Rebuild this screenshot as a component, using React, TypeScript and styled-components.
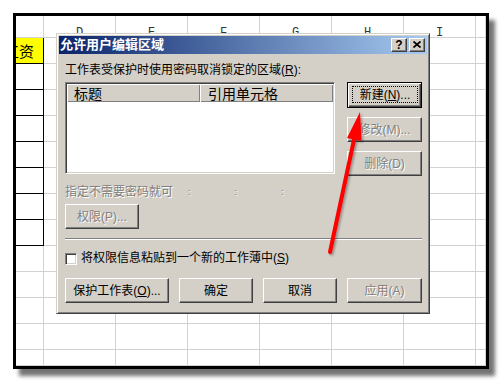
import React from "react";
import styled, { createGlobalStyle } from "styled-components";

const UI_FONT = `"Liberation Sans", "Noto Sans CJK SC", sans-serif`;

const GlobalStyle = createGlobalStyle`
  html, body { margin: 0; padding: 0; background: #fff; }
  body { font-family: ${UI_FONT}; font-size: 12px; }
  * { box-sizing: border-box; }
`;

const Page = styled.div`
  position: relative;
  width: 502px;
  height: 382px;
  padding: 13px 0 0 13px;
  overflow: hidden;
  background: #fff;
`;

const Sheet = styled.div`
  width: 476px;
  height: 356px;
  border: 3px solid #000;
  box-shadow: 6px 7px 4px rgba(0, 0, 0, 0.55);
  background: #fff;
  overflow: hidden;
`;

const Grid = styled.div`
  display: grid;
  grid-template-columns: 28px repeat(6, 72px) 10px;
  grid-template-rows: 22px repeat(12, 26px) 16px;
`;

const HeadCell = styled.div`
  border-right: 1px solid #d2d2d2;
  border-bottom: 1px solid #d2d2d2;
  display: flex;
  align-items: flex-end;
  justify-content: center;
  padding-bottom: 0;
  font-family: "Liberation Mono", monospace;
  font-size: 12px;
  line-height: 7px;
  color: #333;
`;

const Cell = styled.div<{ $boxed?: boolean; $fill?: string }>`
  border-right: 1px solid ${(p) => (p.$boxed ? "#000" : "#d2d2d2")};
  border-bottom: 1px solid ${(p) => (p.$boxed ? "#000" : "#d2d2d2")};
  background: ${(p) => p.$fill ?? "#fff"};
  overflow: hidden;
  display: flex;
  align-items: center;
  justify-content: flex-end;
  padding-right: 9px;
  font-family: "Noto Sans CJK SC", sans-serif;
  font-size: 15px;
  white-space: nowrap;
  color: #000;
`;

const Dialog = styled.div`
  position: absolute;
  left: 56px;
  top: 33px;
  width: 374px;
  height: 281px;
  background: #d4d0c8;
  border: 1px solid;
  border-color: #d4d0c8 #404040 #404040 #d4d0c8;
  box-shadow: inset 1px 1px #fff, inset -1px -1px #808080;
  padding: 2px;
  display: flex;
  flex-direction: column;
  font-family: ${UI_FONT};
  font-size: 12px;
  color: #000;
`;

const TitleBar = styled.div`
  height: 18px;
  background: linear-gradient(to right, #0a246a, #a6caf0);
  display: flex;
  align-items: center;
  gap: 2px;
  padding: 0 2px 0 1px;
`;

const TitleText = styled.div`
  flex: 1;
  color: #fff;
  font-weight: bold;
  font-size: 13px;
  line-height: 18px;
  white-space: nowrap;
`;

const CaptionButton = styled.div`
  width: 16px;
  height: 14px;
  background: #d4d0c8;
  border: 1px solid;
  border-color: #fff #404040 #404040 #fff;
  box-shadow: inset -1px -1px #808080;
  display: flex;
  align-items: center;
  justify-content: center;
  font-family: "Liberation Sans", sans-serif;
  font-weight: bold;
  font-size: 12px;
  line-height: 1;
  padding-bottom: 1px;
`;

const Client = styled.div`
  flex: 1;
  padding: 9px 5px 0 6px;
  display: flex;
  flex-direction: column;
`;

const Label = styled.div`
  height: 14px;
  line-height: 14px;
  white-space: nowrap;
`;

const U = styled.span`
  text-decoration: underline;
  text-underline-offset: 1px;
`;

const TopRow = styled.div`
  display: flex;
  align-items: flex-start;
  gap: 12px;
  margin-top: 5px;
`;

const ListBox = styled.div`
  width: 270px;
  height: 92px;
  background: #fff;
  border: 1px solid;
  border-color: #808080 #fff #fff #808080;
  box-shadow: inset 1px 1px #404040, inset -1px -1px #d4d0c8;
  padding: 1px;
`;

const ListHeader = styled.div`
  display: grid;
  grid-template-columns: 133px 1fr;
  height: 18px;
`;

const ColHeader = styled.div<{ $pad: number }>`
  background: #d4d0c8;
  box-shadow: inset 1px 1px #fff, inset -1px -1px #808080;
  padding-left: ${(p) => p.$pad}px;
  font-family: "Noto Sans CJK SC", sans-serif;
  font-size: 14px;
  line-height: 18px;
  white-space: nowrap;
`;

const ButtonColumn = styled.div`
  display: flex;
  flex-direction: column;
  gap: 9px;
  width: 75px;
`;

const Button = styled.div<{ $w?: number; $h?: number; $dim?: boolean; $default?: boolean }>`
  width: ${(p) => p.$w ?? 75}px;
  height: ${(p) => p.$h ?? 25}px;
  background: #d4d0c8;
  border: 1px solid;
  border-color: ${(p) => (p.$default ? "#000" : "#fff #404040 #404040 #fff")};
  box-shadow: ${(p) =>
    p.$default
      ? "inset 1px 1px #fff, inset -1px -1px #404040, inset -2px -2px #808080"
      : "inset -1px -1px #808080"};
  display: flex;
  align-items: stretch;
  padding: ${(p) => (p.$default ? "3px 3px 4px 4px" : "0")};
  color: ${(p) => (p.$dim ? "#808080" : "#000")};
  text-shadow: ${(p) => (p.$dim ? "1px 1px 0 #fff" : "none")};
  white-space: nowrap;
`;

const ButtonFace = styled.span<{ $focus?: boolean }>`
  flex: 1;
  display: flex;
  align-items: center;
  justify-content: center;
  border: 1px dotted ${(p) => (p.$focus ? "#000" : "transparent")};
  line-height: 14px;
`;

const HintRow = styled.div`
  margin-top: 9px;
  height: 14px;
  line-height: 14px;
  display: flex;
  color: #808080;
  text-shadow: 1px 1px 0 #fff;
  white-space: nowrap;
`;

const Colon = styled.span<{ $gap: number }>`
  margin-left: ${(p) => p.$gap}px;
  font-size: 9px;
`;

const PermRow = styled.div`
  margin-top: 5px;
`;

const Separator = styled.div`
  margin-top: 9px;
  width: 357px;
  height: 2px;
  border-top: 1px solid #808080;
  border-bottom: 1px solid #fff;
`;

const CheckRow = styled.div`
  margin-top: 12px;
  height: 13px;
  display: flex;
  align-items: center;
  gap: 4px;
  line-height: 13px;
  white-space: nowrap;
`;

const CheckBox = styled.span`
  width: 12px;
  height: 12px;
  background: #fff;
  border: 1px solid;
  border-color: #808080 #fff #fff #808080;
  box-shadow: inset 1px 1px #404040, inset -1px -1px #d4d0c8;
`;

const ButtonRow = styled.div`
  margin-top: 13px;
  display: flex;
  gap: 10px;
`;

const Overlay = styled.svg`
  position: absolute;
  left: 0;
  top: 0;
  pointer-events: none;
`;

const letters = ["", "D", "E", "F", "G", "H", "I", ""];

function Spreadsheet() {
  const rows = Array.from({ length: 13 }, (_, r) => r);
  return (
    <Sheet>
      <Grid>
        {letters.map((l, i) => (
          <HeadCell key={`h${i}`}>{l}</HeadCell>
        ))}
        {rows.map((r) =>
          letters.map((_, c) => {
            const boxed = c === 0 && r < 8;
            const fill = c === 0 && r === 0 ? "#ffff00" : undefined;
            return (
              <Cell key={`${r}-${c}`} $boxed={boxed} $fill={fill}>
                {c === 0 && r === 0 ? "工资" : null}
              </Cell>
            );
          })
        )}
      </Grid>
    </Sheet>
  );
}

function CloseGlyph() {
  return (
    <svg width="8" height="7" viewBox="0 0 8 7">
      <path d="M0.5 0.5 L7.5 6.5 M7.5 0.5 L0.5 6.5" stroke="#000" strokeWidth="1.7" />
    </svg>
  );
}

export default function App() {
  return (
    <>
      <GlobalStyle />
      <Page>
        <Spreadsheet />
        <Dialog>
          <TitleBar>
            <TitleText>允许用户编辑区域</TitleText>
            <CaptionButton>?</CaptionButton>
            <CaptionButton>
              <CloseGlyph />
            </CaptionButton>
          </TitleBar>
          <Client>
            <Label>
              工作表受保护时使用密码取消锁定的区域(<U>R</U>):
            </Label>
            <TopRow>
              <ListBox>
                <ListHeader>
                  <ColHeader $pad={7}>标题</ColHeader>
                  <ColHeader $pad={8}>引用单元格</ColHeader>
                </ListHeader>
              </ListBox>
              <ButtonColumn>
                <Button $default $h={26}>
                  <ButtonFace $focus>
                    新建(<U>N</U>)...
                  </ButtonFace>
                </Button>
                <Button $dim>
                  <ButtonFace>修改(M)...</ButtonFace>
                </Button>
                <Button $dim>
                  <ButtonFace>删除(D)</ButtonFace>
                </Button>
              </ButtonColumn>
            </TopRow>
            <HintRow>
              指定不需要密码就可
              <Colon $gap={15}>:</Colon>
              <Colon $gap={44}>:</Colon>
              <Colon $gap={44}>:</Colon>
            </HintRow>
            <PermRow>
              <Button $dim $w={74}>
                <ButtonFace>权限(P)...</ButtonFace>
              </Button>
            </PermRow>
            <Separator />
            <CheckRow>
              <CheckBox />
              <span>
                将权限信息粘贴到一个新的工作薄中(<U>S</U>)
              </span>
            </CheckRow>
            <ButtonRow>
              <Button $w={104}>
                <ButtonFace>
                  保护工作表(<U>O</U>)...
                </ButtonFace>
              </Button>
              <Button $w={74}>
                <ButtonFace>确定</ButtonFace>
              </Button>
              <Button $w={74}>
                <ButtonFace>取消</ButtonFace>
              </Button>
              <Button $dim>
                <ButtonFace>应用(A)</ButtonFace>
              </Button>
            </ButtonRow>
          </Client>
        </Dialog>
        <Overlay width={502} height={382} viewBox="0 0 502 382">
          <defs>
            <filter id="arrowShadow" x="-20%" y="-20%" width="140%" height="140%">
              <feDropShadow dx="1.5" dy="1.5" stdDeviation="1" floodColor="#000" floodOpacity="0.35" />
            </filter>
          </defs>
          <g filter="url(#arrowShadow)">
            <line x1="330" y1="252" x2="355" y2="135" stroke="#ff0000" strokeWidth="4" strokeLinecap="round" />
            <polygon points="360,112 347,138 361.5,141" fill="#ff0000" />
          </g>
        </Overlay>
      </Page>
    </>
  );
}
